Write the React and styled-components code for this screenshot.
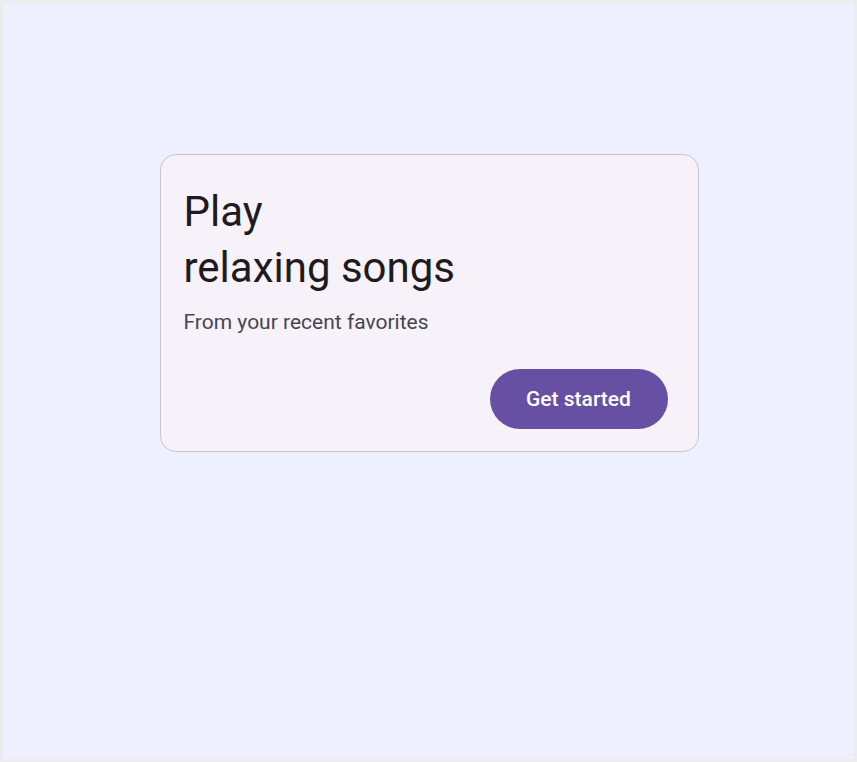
import React from "react";
import styled, { createGlobalStyle } from "styled-components";

const Global = createGlobalStyle`
  html, body { margin: 0; padding: 0; }
  body { background: #ececef; font-family: Roboto, "Noto Sans", sans-serif; }
`;

const Page = styled.div`
  box-sizing: border-box;
  margin: 3px;
  width: 851px;
  height: 756px;
  background: #eef0ff;
  display: flex;
  justify-content: center;
  align-items: flex-start;
  padding: 151px 0 0 1px;
`;

const Card = styled.div`
  box-sizing: border-box;
  width: 539px;
  height: 298px;
  background: #f7f2fa;
  border: 1px solid #c8c3d0;
  border-radius: 16px;
  padding: 29px 30px 22px 23px;
  display: flex;
  flex-direction: column;
`;

const Title = styled.h1`
  margin: 0;
  font-family: Roboto, sans-serif;
  font-weight: 400;
  font-size: 42px;
  line-height: 56px;
  color: #1d1b20;
`;

const Subtitle = styled.p`
  margin: 12px 0 0;
  font-family: Roboto, sans-serif;
  font-size: 21px;
  line-height: 28px;
  color: #49454f;
`;

const Actions = styled.div`
  margin-top: auto;
  display: flex;
  justify-content: flex-end;
`;

const Button = styled.button`
  box-sizing: border-box;
  width: 178px;
  height: 60px;
  padding: 0;
  border: none;
  border-radius: 30px;
  background: #6750a4;
  color: #ffffff;
  font-family: Roboto, sans-serif;
  font-weight: 500;
  font-size: 21px;
  cursor: pointer;
`;

export default function App() {
  return (
    <>
      <Global />
      <Page>
        <Card>
          <Title>
            Play
            <br />
            relaxing songs
          </Title>
          <Subtitle>From your recent favorites</Subtitle>
          <Actions>
            <Button>Get started</Button>
          </Actions>
        </Card>
      </Page>
    </>
  );
}
